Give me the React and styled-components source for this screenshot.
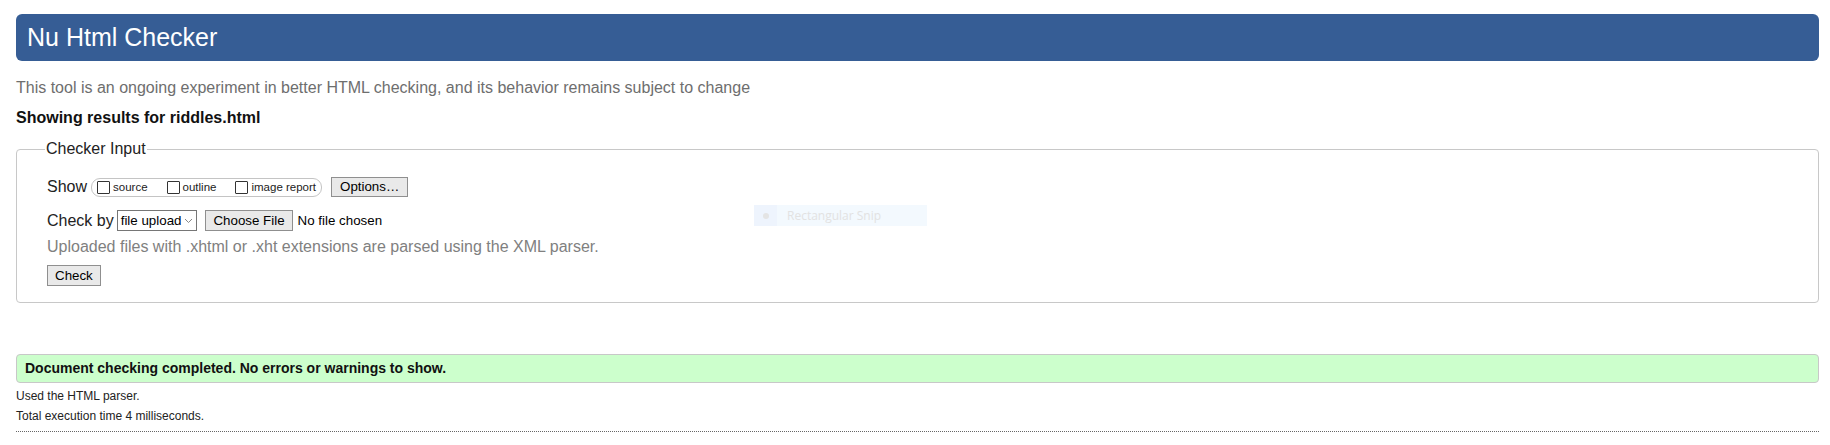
import React from "react";
import styled, { createGlobalStyle } from "styled-components";

const GlobalStyle = createGlobalStyle`
  html, body {
    margin: 0;
    padding: 0;
    background: #fff;
  }
  body {
    font-family: "Liberation Sans", Arial, sans-serif;
    font-size: 16px;
    color: #222;
  }
`;

const Page = styled.div`
  padding: 14px 11px 0 16px;
  display: flex;
  flex-direction: column;
`;

const Header = styled.h1`
  margin: 0;
  height: 47px;
  line-height: 47px;
  padding-left: 11px;
  background: #365d95;
  border-radius: 6px;
  color: #fff;
  font-size: 25px;
  font-weight: normal;
`;

const Tagline = styled.p`
  margin: 18px 0 0;
  line-height: 18px;
  color: #6e6e6e;
  font-size: 16px;
`;

const ResultsFor = styled.h2`
  margin: 12px 0 0;
  line-height: 18px;
  font-size: 16px;
  font-weight: bold;
  color: #111;
`;

const Fieldset = styled.fieldset`
  margin: 13px 0 0;
  padding: 19px 0 16px 30px;
  border: 1px solid #c8c8c8;
  border-radius: 4px;
  min-width: 0;
`;

const Legend = styled.legend`
  padding: 0 1px;
  margin-left: -2px;
  line-height: 18px;
  font-size: 16px;
  color: #222;
`;

const Row = styled.div`
  display: flex;
  align-items: center;
  height: ${(p) => p.$h || 20}px;
  margin-top: ${(p) => p.$mt || 0}px;
`;

const RowLabel = styled.span`
  font-size: 16px;
  color: #222;
  margin-right: ${(p) => p.$gap || 4}px;
`;

const ShowGroup = styled.span`
  display: inline-flex;
  align-items: center;
  height: 17px;
  padding: 0 5px 0 5px;
  border: 1px solid #c4c4c4;
  border-radius: 9px;
  margin-right: 9px;
`;

const ShowOption = styled.label`
  display: inline-flex;
  align-items: center;
  font-size: 11.5px;
  color: #222;
  margin-right: ${(p) => (p.$last ? 0 : 19)}px;
`;

const Box = styled.span`
  display: inline-block;
  width: 11px;
  height: 11px;
  border: 1px solid #333;
  background: #fff;
  margin-right: 3px;
  border-radius: 1px;
`;

const Button = styled.button`
  font-family: "Liberation Sans", Arial, sans-serif;
  font-size: 13.333px;
  color: #000;
  height: ${(p) => p.$h || 20}px;
  padding: 0 ${(p) => p.$px || 6}px;
  background: #e9e9e9;
  border: 1px solid #8f8f8f;
  border-radius: 0;
  line-height: 1;
`;

const Select = styled.span`
  display: inline-flex;
  align-items: center;
  height: 19px;
  padding: 0 3px 0 3px;
  border: 1px solid #767676;
  font-size: 13.333px;
  color: #000;
  margin-right: 8px;
  background: #fff;
`;

const Chevron = styled.svg`
  margin-left: 3px;
`;

const FileName = styled.span`
  font-size: 13.333px;
  color: #000;
  margin-left: 5px;
`;

const Note = styled.p`
  margin: 7px 0 0;
  line-height: 18px;
  font-size: 16px;
  color: #808080;
`;

const Success = styled.div`
  margin-top: 51px;
  height: 27px;
  line-height: 27px;
  padding-left: 8px;
  background: #ccffcc;
  border: 1px solid #c8c8c8;
  border-radius: 4px;
  font-size: 14px;
  font-weight: bold;
  color: #111;
`;

const Detail = styled.p`
  margin: ${(p) => p.$mt}px 0 0;
  line-height: 14px;
  font-size: 12px;
  color: #222;
`;

const Divider = styled.hr`
  margin: 8px 0 0;
  border: 0;
  border-top: 1px dotted #666;
  height: 0;
`;

const SnipHint = styled.div`
  position: absolute;
  left: 754px;
  top: 205px;
  width: 173px;
  height: 21px;
  display: flex;
  align-items: center;
  background: #f3f9fe;
  font-family: "Open Sans", "Liberation Sans", sans-serif;
  font-size: 12px;
  color: #e2e2e2;
`;

const SnipIcon = styled.span`
  width: 23px;
  height: 100%;
  display: flex;
  align-items: center;
  justify-content: center;
  background: #eef4fd;
  margin-right: 10px;

  &::before {
    content: "";
    width: 6px;
    height: 6px;
    border-radius: 50%;
    background: #e4e4e4;
  }
`;

export default function App() {
  return (
    <>
      <GlobalStyle />
      <Page>
        <Header>Nu Html Checker</Header>
        <Tagline>
          This tool is an ongoing experiment in better HTML checking, and its
          behavior remains subject to change
        </Tagline>
        <ResultsFor>Showing results for riddles.html</ResultsFor>
        <Fieldset>
          <Legend>Checker Input</Legend>
          <Row>
            <RowLabel>Show</RowLabel>
            <ShowGroup>
              <ShowOption>
                <Box />
                source
              </ShowOption>
              <ShowOption>
                <Box />
                outline
              </ShowOption>
              <ShowOption $last>
                <Box />
                image report
              </ShowOption>
            </ShowGroup>
            <Button $px={8}>Options…</Button>
          </Row>
          <Row $h={21} $mt={13}>
            <RowLabel $gap={3}>Check by</RowLabel>
            <Select>
              file upload
              <Chevron width="9" height="6" viewBox="0 0 9 6">
                <path d="M1 1l3.5 3.5L8 1" fill="none" stroke="#888" strokeWidth="1" />
              </Chevron>
            </Select>
            <Button $h={21} $px={7}>Choose File</Button>
            <FileName>No file chosen</FileName>
          </Row>
          <Note>
            Uploaded files with .xhtml or .xht extensions are parsed using the
            XML parser.
          </Note>
          <Row $h={21} $mt={9}>
            <Button $h={21} $px={7}>Check</Button>
          </Row>
        </Fieldset>
        <Success>
          Document checking completed. No errors or warnings to show.
        </Success>
        <Detail $mt={6}>Used the HTML parser.</Detail>
        <Detail $mt={6}>Total execution time 4 milliseconds.</Detail>
        <Divider />
      </Page>
      <SnipHint>
        <SnipIcon />
        Rectangular Snip
      </SnipHint>
    </>
  );
}
